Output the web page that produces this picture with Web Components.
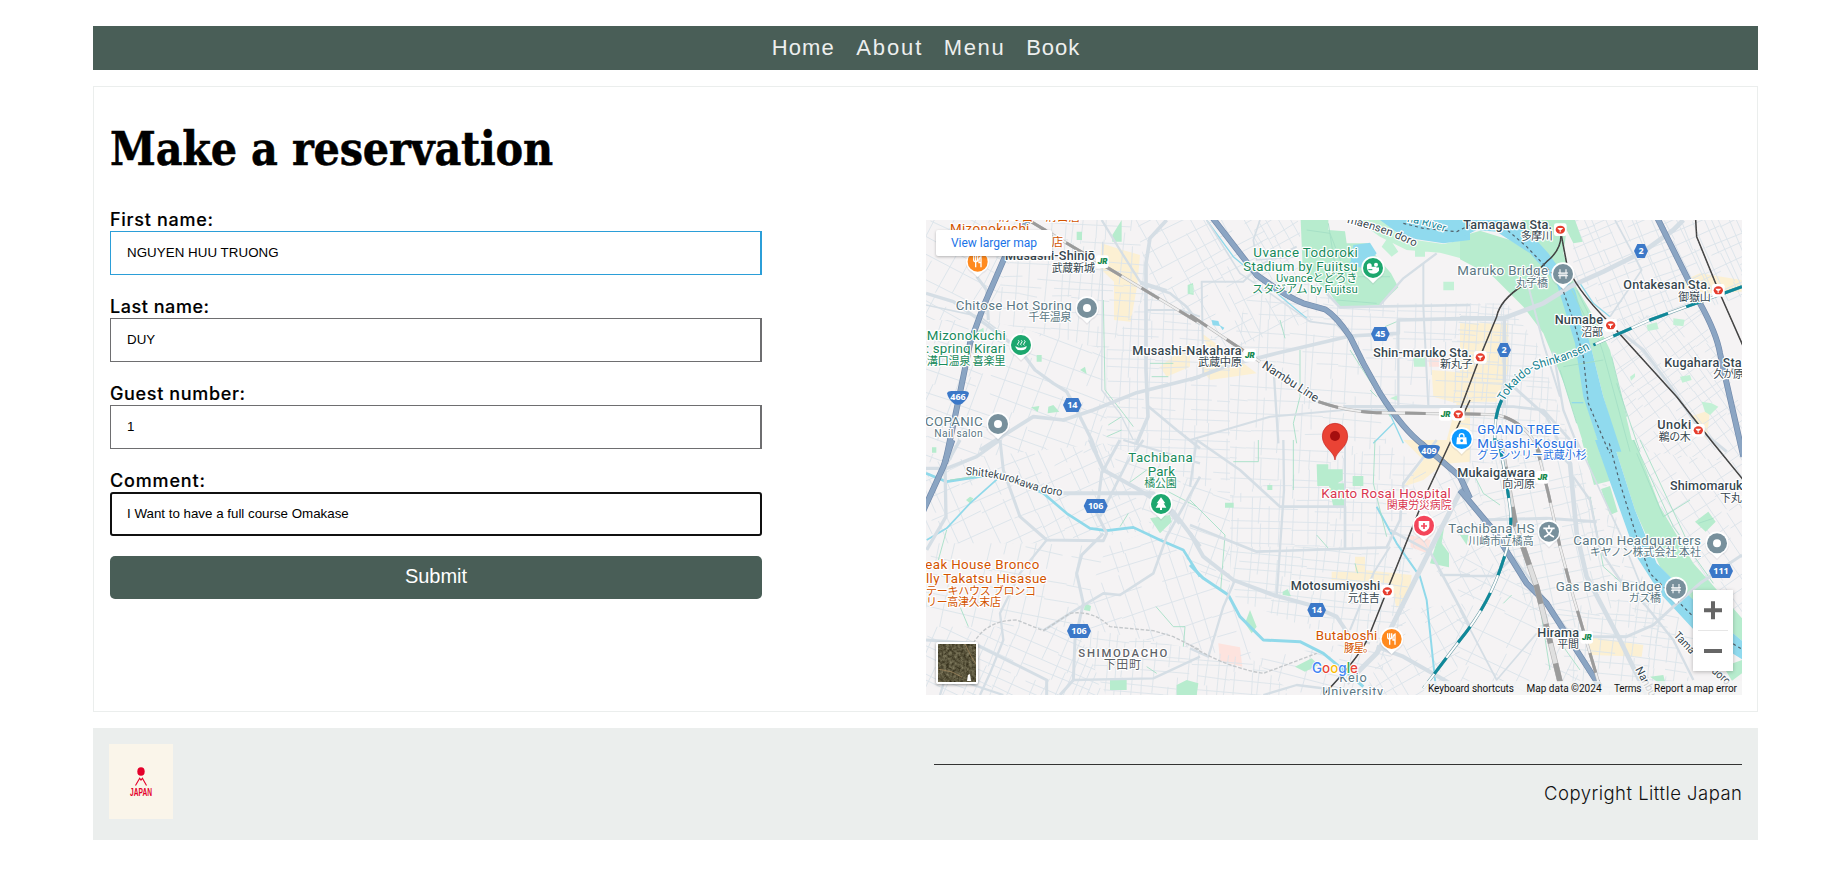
<!DOCTYPE html>
<html lang="en">
<head>
<meta charset="utf-8">
<title>Little Japan - Make a reservation</title>
<style>
body{margin:0;background:#fff;color:#000;font-family:Inter,"Liberation Sans",sans-serif}
</style>
</head>
<body>
<little-japan-page></little-japan-page>
<script>
// Spreads its text evenly over the width that is given to it.
class FitText extends HTMLElement{
  connectedCallback(){
    const r=this.attachShadow({mode:'open'});
    r.innerHTML='<style>:host{display:inline-block;white-space:nowrap;text-align:left}span{display:inline-block}</style><span><slot></slot></span>';
    const w=+this.getAttribute('width'),s=r.querySelector('span');
    const n=this.textContent.length;
    this.style.width=w+'px';
    s.style.letterSpacing=((w-s.getBoundingClientRect().width)/Math.max(1,n-1))+'px';
  }
}
customElements.define('fit-text',FitText);

class SiteNav extends HTMLElement{
  connectedCallback(){
    this.attachShadow({mode:'open'}).innerHTML=`<style>
    :host{display:block;background:#495e57;height:44px}
    nav{display:flex;justify-content:center;align-items:center;gap:22.5px;height:44px;padding-right:0;box-sizing:border-box;font:22px "Liberation Sans",Inter,sans-serif;color:#edefee}
    a{color:inherit;text-decoration:none;display:block;line-height:44px}
    </style><nav><a><fit-text width="62">Home</fit-text></a><a><fit-text width="65">About</fit-text></a><a><fit-text width="60">Menu</fit-text></a><a><fit-text width="53">Book</fit-text></a></nav>`;
  }
}
customElements.define('site-nav',SiteNav);

class FormField extends HTMLElement{
  connectedCallback(){
    const a=k=>this.getAttribute(k);
    this.attachShadow({mode:'open'}).innerHTML=`<style>
    :host{display:block;height:87px}
    label{display:block;height:24px;line-height:25px;font-size:18px;font-weight:500;-webkit-text-stroke:.15px #000}
    input{display:block;box-sizing:border-box;width:652px;height:44px;margin:0;padding:0 16px 2px;border:1px solid #6e6e70;border-right-width:2px;font:13.33px "Liberation Sans",Arial,sans-serif;color:#000;background:#fff;outline:none}
    :host([hot]) input{border-color:#2b9ed8}
    :host([focused]) input{border:2px solid #101010;border-radius:3px;padding:0 15px 2px}
    </style><label><fit-text width="${a('lw')}">${a('label')}</fit-text></label><input value="${a('value')}" style="letter-spacing:${a('track')||0}px">`;
  }
}
customElements.define('form-field',FormField);

class ReservationForm extends HTMLElement{
  connectedCallback(){
    this.attachShadow({mode:'open'}).innerHTML=`<style>
    :host{display:block;width:652px}
    button{display:block;width:652px;height:43px;margin-top:1px;border:0;border-radius:5px;background:#495e57;color:#fff;font:20px "Liberation Sans",Arial,sans-serif;padding:0 0 2px}
    </style>
    <form-field hot label="First name:" lw="103" value="NGUYEN HUU TRUONG" track="0.05"></form-field>
    <form-field label="Last name:" lw="99" value="DUY"></form-field>
    <form-field label="Guest number:" lw="135" value="1"></form-field>
    <form-field focused label="Comment:" lw="95" value="I Want to have a full course Omakase"></form-field>
    <button type="button">Submit</button>`;
  }
}
customElements.define('reservation-form',ReservationForm);

// Street map. Each entry starts with its tile; a tile is 270x230 px and holds three units to a pixel.
const TILE=[[0,0],[810,0],[1620,0],[0,690],[810,690],[1620,690]];
const g=(t,s)=>`<g transform="translate(${TILE[t]})">${s}</g>`;
const esc=s=>s.replace(/&/g,'&amp;');
let seed=7;
const rnd=()=>(seed=(seed*16807)%2147483647)/2147483647;

// A district: streets at one angle inside a polygon.
function district(id,poly,angle,step){
  const p=poly.split(' ').map(q=>q.split(',').map(Number));
  const xs=p.map(q=>q[0]),ys=p.map(q=>q[1]);
  const x0=Math.min(...xs),x1=Math.max(...xs),y0=Math.min(...ys),y1=Math.max(...ys);
  const cx=(x0+x1)/2,cy=(y0+y1)/2,R=Math.hypot(x1-x0,y1-y0)/2;
  let d='';
  for(const vert of [0,1]){
    for(let a=-R;a<R;a+=step*(.5+rnd()*1.1)){
      let b=-R+rnd()*60;
      while(b<R){
        const len=50+rnd()*260,e=b+len,j=(rnd()-.5)*14;
        d+=vert?`M${a|0} ${b|0}L${(a+j)|0} ${e|0}`:`M${b|0} ${a|0}L${e|0} ${(a+j)|0}`;
        b=e+(rnd()<.45?rnd()*70:0);
        if(rnd()<.3)a+=3;
      }
    }
  }
  return `<clipPath id="${id}"><polygon points="${poly}"/></clipPath><g clip-path="url(#${id})"><path transform="translate(${cx} ${cy}) rotate(${angle})" d="${d}"/></g>`;
}
const districts=()=>[
 ['0,0 330,0 200,330 0,330',28,46],['330,0 640,0 690,240 560,420 200,330',4,36],['640,0 1000,0 1180,330 930,420 690,240',-28,40],
 ['0,330 200,330 560,420 560,700 0,760',20,44],['560,420 690,240 930,420 930,860 560,700',2,30],
 ['1000,0 1140,0 1140,210 1010,210',60,34],['1000,210 1180,200 1320,400 1400,700 930,860 930,420',3,42],
 ['1180,240 1430,280 1760,280 1780,560 1400,600 1320,400',2,34],['1620,280 1760,280 1850,400 1960,720 1780,760 1640,760 1600,560',4,24],
 ['0,760 560,700 700,960 350,1000 0,1000',-24,42],['560,700 930,860 930,1160 700,960',20,40],
 ['0,1000 350,1000 560,1010 470,1250 0,1250',12,62],['560,1010 700,960 930,1160 1000,1350 470,1250',-18,54],
 ['0,1250 470,1250 560,1460 0,1460',24,32],['470,1250 1000,1350 1130,1460 560,1460',5,28],
 ['930,860 1400,700 1480,760 1480,1010 930,1010',2,28],['930,1010 1480,1010 1440,1300 1280,1300 930,1160',6,26],
 ['1000,1350 1280,1300 1440,1300 1330,1460 1130,1460',14,46],['1480,760 1640,760 1780,1100 1640,1180 1480,1010',62,42],
 ['1440,1200 1640,1180 1600,1460 1330,1460',-30,42],['1640,760 1960,720 2060,980 2080,1190 1880,1300 1780,1100',78,36],
 ['1620,1000 1880,1160 2000,1460 1600,1460',26,54],['1900,1200 2200,1150 2330,1460 1960,1460',6,27],
 ['1960,0 2220,0 2320,280 2100,350 1960,200',-22,27],['2210,0 2466,0 2466,260 2340,300',-24,28],
 ['2050,330 2340,300 2466,600 2466,760 2150,720',-36,30],['2140,720 2466,760 2466,1220 2330,1130 2200,900',-34,36],
 ['2040,760 2130,1060 2260,1200 2330,1300 2200,1300 2080,1100',12,44]
].map((a,i)=>district('d'+i,...a)).join('');

const P='#b7ecce',urban='#fcf0d3';
const areas=[
 [0,urban,'M545 100L600 118 660 135 652 225 632 335 582 330 582 215 540 175Z'],[0,urban,'M720 470L810 400 810 470 740 500Z'],
 [1,urban,'M35 370L160 460 200 490 60 510 30 470 70 450Z'],[1,urban,'M725 480L840 490 840 690 770 690 800 580 730 560Z'],
 [2,urban,'M0 340H145V480L110 575H0Z'],[2,urban,'M640 225L720 190 845 210 845 245 740 250Z'],[2,urban,'M690 620L750 600 740 690Z'],
 [4,urban,'M640 0H840V65L760 72 700 120 640 140 700 60Z'],[4,urban,'M425 395H495V350H525V390L665 405 660 450 620 505 600 430 425 420Z'],
 [5,urban,'M370 530L385 590 550 615 545 650 395 645Z'],
 [4,'#fde3de','M85 610L150 622 157 680 90 662Z'],[4,'#fde3de','M660 285L722 300 712 340 662 322Z'],[1,'#fde3de','M715 440H748V470H718Z'],
 [0,P,'M577 75L605 30 605 95 577 95ZM470 65h16v25h-16ZM803 225l16-6 2 36-18-4ZM350 435h15v20h-15ZM480 480l15-10 5 22ZM385 590l15-5 18 20-35 5ZM333 592l25-4-5 18ZM170 365l20-12 2 15Z'],
 [1,P,'M332 30H415V60L465 64 470 100H530L560 140 603 190 625 232 570 285 450 293 420 250 338 175Z'],
 [1,'#c3f1d6','M500 30H575L640 85 760 102 840 85V152L750 128 650 120 570 80ZM575 110l20-30 30 45-20 15ZM675 120h30v20h-30ZM760 215h32v26h-32ZM670 440h38v30h-36ZM600 565l25-10v18ZM0 225h10v25H0Z'],
 [2,P,'M0 80L60 62 150 90 215 130 295 220 350 400 372 560 425 725H378L312 520 250 370 190 290 100 200 0 148ZM185 30H345L368 95 340 100 320 60 310 130 345 225 412 340 450 420 524 725H478L430 560 395 420 340 240 240 130Z'],
 [2,'#c3f1d6','M560 345l30-8 6 20-32 6ZM640 325l34 4-4 20-30-4ZM660 500l30-5 5 15-28 8ZM725 575l30 5 20 10-25 25-15-10ZM510 500l15-10v10l-12 12Z'],
 [5,P,'M365 0H405L452 122 402 135ZM423 147L450 138 473 215 450 225ZM458 0H524L600 200 700 370 846 535V602L700 482 600 380 525 210ZM705 245l40-30 22 30-30 30ZM790 680l56-20v40l-30 22ZM570 710l40-5 10 40ZM0 285l25 0-5 30Z'],
 [3,P,'M690 235L750 225 755 245 720 280 708 262ZM495 490l18 8-3 16-18-4ZM570 715h50v35h-50ZM770 735l30-15 35 10-5 36-60 0ZM138 180l12-10 10 5-10 15ZM36 22h13v16h-13Z'],
 [4,P,'M380 73H415V88H458V120L430 138H382ZM415 130H462V200H430ZM488 108h32v30h-32ZM232 135h15v15h-15ZM105 188h26v15h-26ZM278 455l15-8 10 22-25-4ZM165 550l15-40 20 50-15 20ZM315 680l50-25 20 20-40 20ZM765 245L745 290 720 370 777 382V340L755 310ZM0 725l20 40H0Z'],
];
const waters=[
 [1,'M570 30H840V90L760 100 640 82Z'],[2,'M0 30H140L215 75 265 130 345 240 395 420 430 560 484 725H424L370 560 345 400 290 220 210 130 110 65 50 60 0 85Z'],
 [5,'M405 0H458L525 210 590 370 700 480 846 602V658L700 568 600 460 530 350Z'],
 [1,'M490 105L540 98 560 130 520 175 480 165ZM65 330l20 3 5 15-22-2ZM88 345l15 8-5 8Z'],
];
const roads=[
 [0,'M18 250L100 275 200 345 300 420 345 480 400 520 440 545 470 600 515 690 530 730',10],[0,'M170 200L200 240 205 330',9],
 [0,'M18 285L180 320 260 380',5],[0,'M740 30L690 85 678 160 678 480 684 620 650 700',11],[0,'M660 220L750 250 800 290 840 345',8],
 [0,'M180 720L260 670 340 620 430 630 520 600 650 548 840 500',11],[0,'M680 585L770 660 840 715',8],[0,'M545 30L600 120 660 215 740 240',7],
 [0,'M678 300H780L840 320',6],[0,'M548 95L545 540 600 610 640 690',4],
 [1,'M0 510L120 465 260 430 480 378 625 370 625 330 840 325',11],[1,'M40 500L35 215H160L210 165 320 110',6],[1,'M840 285L540 290 450 292 410 250',8],
 [1,'M570 285L640 205 740 130',7],[1,'M625 330L625 590',7],[1,'M250 465L265 700',7],[1,'M460 590L840 590',10],[1,'M700 160V290L715 590',6],[1,'M50 30L150 190 240 250 360 335 440 345 480 385',5],[1,'M0 690L240 620 460 600 610 600',6],[1,'M210 30L190 90 200 150 320 140',5],
 [2,'M0 325H130L250 280 330 230 430 185 550 125 640 60 670 30',14],[2,'M0 590L160 590 250 600 330 690',8],[2,'M133 330L133 590',10],[2,'M480 365L550 420 640 540 720 660 800 725',9],[2,'M280 425L310 600 360 725',7],[2,'M450 320L545 180 465 30',5],[2,'M200 210L250 400 300 560',6],[2,'M160 530L260 620 310 725',9],
 [3,'M18 85H80L170 50 240 0',10],[3,'M240 0L250 90 300 230 380 300 550 302 560 280 530 220 545 100 600 0',9],[3,'M120 0L75 80 78 230 20 330',10],[3,'M510 0L550 90 650 145 760 215 840 320',12],[3,'M430 160H700L780 250',12],[3,'M670 0L620 70 540 230',8],[3,'M550 280L485 345 470 400 490 490 465 600 460 720 420 765',9],[3,'M380 300L300 400 240 520 250 600 210 700 180 765',7],[3,'M18 600L160 610 280 670 380 720 380 765',9],[3,'M370 572L450 520 550 460 600 465 700 400 740 290 840 110',8],[3,'M60 765L80 700 160 735 250 765M460 720L700 715 840 650M610 0L840 70',7],
 [4,'M20 0L150 90 270 200H465V325',8],[4,'M0 280L40 350 130 420 250 465 360 495 440 530 480 590',12],[4,'M0 255L200 335 590 322 630 240 640 130 740 0',8],[4,'M600 320L550 400 480 570',6],[4,'M280 0L282 150 260 470',7],[4,'M20 0L0 140',7],[4,'M465 0V320',6],[4,'M840 100L720 330 600 570 560 640 470 730',15],[4,'M560 620L640 650 780 730',12],[4,'M600 270L720 335 840 560',8],[4,'M135 420L100 500 70 600 55 650 0 625M480 590L540 610M220 765L320 735 440 750',7],[4,'M750 405H840',7],
 [5,'M260 0L330 70 350 280 380 410 480 600 560 765',14],[5,'M60 240L260 235 410 245',9],[5,'M0 408H100L160 350',8],[5,'M340 110L390 180 420 330 480 420 560 500 640 600 700 720',7],[5,'M380 590L500 590 580 555 640 500 720 430 846 345',9],[5,'M0 510L110 720 230 580',5],[5,'M330 580L250 470 160 350',6],[5,'M350 0L480 280 560 480',5],
];
const green=[[1,'M330 420L330 560 310 640 320 700M270 330L285 385M480 420L570 560 600 620M585 350L620 335M540 540L560 560M415 40L440 200M350 60L420 70 470 200 600 200M440 270L560 280'],
 [0,'M550 270L555 540 610 610 640 650M565 645L605 620M690 460H760M695 500H745M560 680L605 660'],[4,'M0 180L105 285 92 450M555 0L550 130 590 290M310 0V150M380 285L415 325M495 370L503 400M130 65H205V0'],
 [3,'M708 500L760 560 795 560 790 620M680 680L710 700M100 500L120 500 145 560M80 270L55 360M600 260L625 220M625 130L680 90M745 155L830 200M90 120L200 105'],
 [2,'M350 240L400 340 430 430 510 725M335 240L380 330M455 440L500 620M470 520L540 725M310 470L430 450M300 480L350 640'],[5,'M240 500L270 690M40 100L70 160 120 195M520 0L640 260 760 430M540 0L680 300M530 40L610 230M390 170L430 380 520 460M310 620L360 690M610 230L690 180M130 490L155 465M715 250L760 235']];
const streams=[[3,'M18 100L80 125 240 100 370 160 440 220 510 265 560 272 640 262 720 300 790 330 840 410',8],[3,'M240 110L150 190 80 265 20 300',5],[4,'M0 375L40 415 115 465 150 530 220 600 330 605 400 640 520 740',9],[4,'M560 200L620 310 690 410 710 480 740 765',6],[1,'M50 30L130 140 350 325',4],[1,'M550 700L610 640M590 590L640 700',4],[2,'M360 220L400 280 450 320',4],[2,'M335 578H370',4]];
const hw=[[0,'M325 30L255 140 190 290 150 400 130 500 105 620 75 760'],[3,'M97 0L70 80 10 212'],
 [1,'M65 20L200 195Q290 260 340 280L405 298Q440 320 480 380L520 460 570 550Q640 660 700 705L810 800 840 865'],[5,'M0 150L100 270 200 430 260 490 330 600 420 740'],[2,'M590 20L660 160 720 280Q770 370 780 430L800 520 850 740']];
const rail=[[0,'M325 30L840 340'],[1,'M0 315L210 455M385 575Q470 605 560 608L750 611'],[2,'M0 611L110 614Q180 630 220 690L240 730'],[5,'M225 0L265 160 300 320 340 470 415 725']];
const wideRail=[[5,'M120 0L165 250 230 440 300 725']];
const lines=[[2,'M303 70Q305 120 260 155L190 225Q120 270 110 320L60 440 0 600'],[2,'M303 70L320 160Q340 230 450 340L650 560 760 700 850 810'],[2,'M707 30L710 80 775 240 850 410'],[4,'M840 -120L700 180 540 580Q520 640 400 765']];
const shink=[[2,'M846 230L680 290 570 330 400 405'],[2,'M125 570Q100 620 105 700'],[5,'M115 0Q130 60 150 200Q160 280 130 360 90 490 0 600L-110 745']];
const S='#37474f',Gy='#5b7884',Gn='#178a5b',Or='#d35400';
const labels=[
 [0,90,328,68,40,'Mizonokuchi',Or],[0,200,480,32,34,'ー溝の口ー溝口店',Or],[0,395,427,109,34,'店',Or],
 [0,255,525,151,38,'Musashi-Shinjō',S,500],[0,395,525,186,34,'武蔵新城',S],
 [0,107,455,299,40,'Chitose Hot Spring',Gy],[0,325,455,333,34,'千年温泉',Gy],
 [0,20,257,390,40,'Mizonokuchi',Gn],[0,18,257,430,40,': spring Kirari',Gn],[0,20,257,464,34,'溝口温泉 喜楽里',Gn],
 [0,637,965,434,38,'Musashi-Nakahara',S,500],[0,834,966,468,34,'武蔵中原',S],
 [0,15,188,648,40,'COPANIC',Gy],[0,43,188,680,31,'Nail salon',Gy],
 [1,190,503,141,40,'Uvance Todoroki',Gn],[1,160,503,183,40,'Stadium by Fujitsu',Gn],[1,258,503,215,34,'Uvanceとどろき',Gn],[1,186,503,248,34,'スタジアム by Fujitsu',Gn],
 [1,550,845,440,38,'Shin-maruko Sta.',S,500],[1,750,848,474,34,'新丸子',S],
 [2,10,276,56,38,'Tamagawa Sta.',S,500],[2,182,278,90,33,'多摩川',S],
 [2,-8,264,195,40,'Maruko Bridge',Gy],[2,167,264,232,33,'丸子橋',Gy],
 [2,490,752,238,38,'Ontakesan Sta.',S,500],[2,655,752,273,33,'御嶽山',S],
 [2,284,429,343,38,'Numabe',S,500],[2,364,429,377,33,'沼部',S],
 [2,613,845,470,38,'Kugahara Sta',S,500],[2,760,852,504,33,'久が原',S],
 [2,592,694,658,38,'Unoki',S,500],[2,596,692,692,33,'鵜の木',S],
 [2,52,299,671,40,'GRAND TREE','#1f6fe0'],[2,52,350,713,40,'Musashi-Kosugi','#1f6fe0'],[2,52,380,746,33,'グランツリー武蔵小杉','#1f6fe0'],
 [3,625,818,65,40,'Tachibana',Gn],[3,683,765,107,40,'Park',Gn],[3,673,770,140,33,'橘公園',Gn],
 [3,16,358,387,40,'eak House Bronco',Or],[3,18,380,429,40,'lly Takatsu Hisasue',Or],[3,18,348,464,33,'テーキハウス ブロンコ',Or],[3,18,243,498,33,'リー高津久末店',Or],
 [3,475,742,650,34,'SHIMODACHO','#5f6368',500],[3,551,663,687,36,'下田町','#5f6368'],
 [4,394,782,173,40,'Kanto Rosai Hospital','#d9364f'],[4,590,785,206,33,'関東労災病院','#d9364f'],
 [4,302,571,451,38,'Motosumiyoshi',S,500],[4,473,569,486,33,'元住吉',S],
 [4,377,562,599,40,'Butaboshi',Or],[4,462,552,636,33,'豚星。',Or],
 [4,448,530,726,38,'Keio',Gy],[4,397,579,767,38,'University',Gy],
 [5,-8,225,110,38,'Mukaigawara',S,500],[5,127,225,144,33,'向河原',S],
 [4,775,1033,279,40,'Tachibana HS',Gy],[4,835,1031,314,33,'川崎市立橘高',Gy],
 [5,340,723,315,40,'Canon Headquarters',Gy],[5,389,723,348,33,'キヤノン株式会社 本社',Gy],
 [5,287,603,453,40,'Gas Bashi Bridge',Gy],[5,506,603,486,33,'ガス橋',Gy],
 [5,232,357,590,38,'Hirama',S,500],[5,292,357,624,33,'平間',S],
 [5,630,848,151,38,'Shimomaruk',S,500],[5,780,878,187,33,'下丸子',S]
];
const text=l=>g(l[0],`<text x="${l[1]}" y="${l[3]}" font-size="${l[4]}" textLength="${l[2]-l[1]}" lengthAdjust="spacing" fill="${l[6]}" font-weight="${l[7]||400}">${esc(l[5])}</text>`);
const curved=[[1,'n1','M214 472L384 582','Nambu Line',36,S,194],[1,'n2','M470 38Q600 70 690 118','maensen doro',33,S,218],[1,'n3','M650 35Q720 48 778 72','na River',33,'#16889c',118],
 [2,'n4','M132 575Q180 490 260 468T400 412','Tokaido-Shinkansen',36,'#12808e',312],[3,'n5','M136 104Q240 112 300 136T428 168','Shittekurokawa doro',34,S,298],
 [5,'n6','M640 588L760 715','Tama',34,S,76],[5,'n7','M735 680L820 755','n doro',34,S,86],[5,'n8','M525 688L580 790','Nanbu',34,S,96]];
const pins=[[0,173,155,'#ff8a1f','food'],[0,501,294,'#78909c','dot'],[0,303,405,'#1da76e','spa'],[0,234,642,'#78909c','dot'],[1,549,174,'#1da76e','stadium'],[2,5,687,'#0b99ff','bag'],[2,309,192,'#78909c','bridge'],[3,723,192,'#1da76e','tree'],[4,702,257,'#f4455a','cross'],[4,605,597,'#ff8a1f','food'],[5,267,275,'#78909c','school'],[5,771,310,'#78909c','dot'],[5,648,446,'#78909c','bridge']];
const glyph={
 dot:'<circle r="12" fill="#fff"/>',
 food:'<path d="M-12-17v11q0 6 6 6h0q6 0 6-6v-11M-6-17V17M10 17V-15q-7 3-6 18h6" fill="none" stroke="#fff" stroke-width="4"/>',
 spa:'<path d="M-17 3q0 13 17 13T17 3q-6 5-17 5T-17 3Z" fill="#fff"/><path d="M-8-14q5 4 0 8t0 7M1-14q5 4 0 8t0 7M10-14q5 4 0 8t0 7" fill="none" stroke="#fff" stroke-width="3"/>',
 stadium:'<path d="M-18-10q8-8 14 0v6h12q4 4 10 2v10q-8 12-26 8-12-8-10-26Z" fill="#fff"/><circle cx="9" cy="-10" r="6" fill="#fff"/><path d="M-14 5h12" stroke="#1da76e" stroke-width="3"/>',
 bag:'<path d="M-14-5h28l2 21h-32Z" fill="#fff"/><path d="M-7-5v-4q0-7 7-7t7 7v4" fill="none" stroke="#fff" stroke-width="4"/><circle cy="5" r="4" fill="#0b99ff"/>',
 bridge:'<path d="M-15 5H15M-15-3H15M-9-14V14M9-14V14M-3-3V5M3-3V5" stroke="#fff" stroke-width="3.2" fill="none"/>',
 tree:'<path d="M0-20L13-2H8L16 11H3V18H-3V11H-16L-8-2H-13Z" fill="#fff"/>',
 cross:'<path d="M-16-14H16V4Q14 14 0 18-14 14-16 4Z" fill="#fff"/><path d="M0-8V10M-9 1H9" stroke="#f4455a" stroke-width="5"/>',
 school:'<path d="M0-19V-11M-17-10H17M-9-8Q-4 8 15 16M9-8Q4 8-15 16" fill="none" stroke="#fff" stroke-width="5"/>'};
const pin=p=>g(p[0],`<g transform="translate(${p[1]} ${p[2]})"><path d="M0 48L-15 33A36 36 0 1 1 15 33Z" fill="#8892" transform="translate(0 3)"/><path d="M0 46L-15 31A35 35 0 1 1 15 31Z" fill="#fff"/><circle r="30" fill="${p[3]}"/>${glyph[p[4]]}</g>`);
const jr=[[0,547,155],[1,179,436],[1,766,613],[5,247,112],[5,380,592]];
const tokyu=[[1,805,613],[2,301,59],[2,775,241],[2,452,346],[2,61,442],[2,715,661],[4,592,454]];
const hex=[[0,457,585,'14'],[1,571,372,'45'],[2,543,123,'2'],[2,132,420,'2'],[3,527,198,'106'],[3,477,573,'106'],[4,380,510,'14'],[5,783,393,'111']];
const shield=[[0,114,563,'466'],[4,717,35,'409']];
const hexD=w=>`M${-w} 0L${-w+10} -21H${w-10}L${w} 0L${w-10} 21H${-w+10}Z`;
const stroke=(arr,c,w,x='')=>arr.map(a=>g(a[0],`<path d="${a[1]}" stroke="${c}" stroke-width="${w||a[2]}" ${x}/>`)).join('');

class StreetMap extends HTMLElement{
  connectedCallback(){
    let o='';
    o+=areas.filter(a=>a[1]===urban||a[1][1]==='f').map(a=>g(a[0],`<path d="${a[2]}" fill="${a[1]}"/>`)).join('');
    o+=`<g fill="none" stroke="#dce4ea" stroke-width="2.6">${districts()}</g>`;
    o+=areas.filter(a=>a[1]!==urban&&a[1][1]!=='f').map(a=>g(a[0],`<path d="${a[2]}" fill="${a[1]}"/>`)).join('');
    o+=waters.map(a=>g(a[0],`<path d="${a[1]}" fill="#90daee"/>`)).join('');
    o+='<g fill="none" stroke-linejoin="round">';
    o+=stroke(streams,'#90d9ea')+stroke(green,'#a3dfc5',2.6)+stroke(roads,'#d5dee5');
    o+=g(3,'<path d="M160 610Q200 540 290 540L370 572 450 520Q520 510 570 560L700 572 760 590 840 630" stroke="#c3c7ca" stroke-width="4" stroke-dasharray="11 5"/>')+g(4,'<path d="M0 615Q100 680 220 700L380 640" stroke="#c3c7ca" stroke-width="4" stroke-dasharray="11 5"/>');
    o+=stroke(hw,'#7189aa',18)+stroke(hw,'#8ba5c3',14);
    o+=stroke(rail,'#b4b4b4',9)+stroke(rail,'#eee',6)+stroke(rail,'#9b9b9b',9,'stroke-dasharray="62 70"');
    o+=stroke(wideRail,'#b4b4b4',17)+stroke(wideRail,'#dfdfdf',13)+stroke(wideRail,'#9b9b9b',16,'stroke-dasharray="60 62" stroke-dashoffset="40"');
    o+=stroke(lines,'#3d3d3d',4.5)+stroke(lines,'#777',1,'stroke-dasharray="4 4"');
    o+=stroke(shink,'#6b9ca5',9)+stroke(shink,'#fff',6)+stroke(shink,'#0f8899',9,'stroke-dasharray="60 58"');
    o+=g(2,'<path d="M130 50L200 110 300 215 340 330 370 440 385 580 440 710 450 730" stroke="#52616b" stroke-width="3.5" stroke-dasharray="9 9"/>')+g(5,'<path d="M448 10L480 130 530 290 570 400 660 490 720 550 846 628" stroke="#52616b" stroke-width="3.5" stroke-dasharray="9 9"/>')+g(1,'<path d="M640 40L700 55 800 65 840 45" stroke="#52616b" stroke-width="3.5" stroke-dasharray="9 9"/>');
    o+='</g>';
    o+='<g class="t">'+labels.map(text).join('')+curved.map(c=>g(c[0],`<path id="${c[1]}" d="${c[2]}" fill="none"/><text font-size="${c[4]}" fill="${c[5]}"><textPath href="#${c[1]}" textLength="${c[6]}" lengthAdjust="spacingAndGlyphs">${c[3]}</textPath></text>`)).join('')+'</g>';
    o+=jr.map(a=>g(a[0],`<rect x="${a[1]-19}" y="${a[2]-19}" width="38" height="38" rx="7" fill="#fff"/><text class="jr" x="${a[1]-14}" y="${a[2]+8}" textLength="29" lengthAdjust="spacingAndGlyphs">JR</text>`)).join('');
    o+=tokyu.map(a=>g(a[0],`<rect x="${a[1]-19}" y="${a[2]-19}" width="38" height="38" rx="7" fill="#fff"/><ellipse cx="${a[1]}" cy="${a[2]}" rx="14" ry="12" fill="#e63c2c"/><path d="M${a[1]-9} ${a[2]-5}h18l-6 6h-2v7h-3v-7h-2Z" fill="#fff"/>`)).join('');
    o+=hex.map(a=>g(a[0],`<g transform="translate(${a[1]} ${a[2]})"><path d="${hexD(a[3].length===3?36:a[3].length===2?28:21)}" fill="#3b78c8"/><text class="n" y="10">${a[3]}</text></g>`)).join('');
    o+=shield.map(a=>g(a[0],`<g transform="translate(${a[1]} ${a[2]})"><path d="M-33-14Q-30-20-20-20H20Q30-20 33-14 30 4 12 18 0 24-12 18-30 4-33-14Z" fill="#3b78c8"/><text class="n" y="8">${a[3]}</text></g>`)).join('');
    o+=pins.map(pin).join('');
    o+=g(1,'<path d="M435 750C432 722 397 714 397 678A38 38 0 0 1 473 678C473 714 438 722 435 750Z" fill="#ea4335" stroke="#c5221f" stroke-width="2"/><circle cx="435" cy="678" r="15" fill="#a50e0e"/>');
    o+=g(4,'<text class="goog" x="366" y="698" font-size="42" textLength="138" lengthAdjust="spacingAndGlyphs"><tspan fill="#4285f4">G</tspan><tspan fill="#ea4335">o</tspan><tspan fill="#fbbc04">o</tspan><tspan fill="#4285f4">g</tspan><tspan fill="#34a853">l</tspan><tspan fill="#ea4335">e</tspan></text>');
    this.attachShadow({mode:'open'}).innerHTML=`<style>
    :host{display:block;position:relative;width:816px;height:475px;overflow:hidden;background:#f5f3f4;font-family:Roboto,"Noto Sans CJK JP",sans-serif}
    svg{display:block}
    .t text{stroke:#fff;stroke-width:7px;stroke-linejoin:round;paint-order:stroke}
    .n{font-size:27px;font-weight:700;fill:#fff;text-anchor:middle;font-family:"Noto Sans",sans-serif}
    .jr{font:italic 900 22px Inter,sans-serif;fill:#178a4f}
    .goog{font-family:Inter,sans-serif;font-weight:500;stroke:#fff;stroke-width:5px;paint-order:stroke}
    .larger{position:absolute;left:10px;top:10px;width:116px;height:26px;background:#fff;border-radius:2px;box-shadow:0 1px 3px #0004;display:flex;align-items:center;justify-content:center;font-size:12px;color:#1a73e8}
    .sat{position:absolute;left:10px;top:422px;width:38px;height:38px;border:2px solid #fff;border-radius:2px;box-shadow:0 1px 3px #0006;overflow:hidden}
    .zoom{position:absolute;left:767px;top:370px;width:40px;height:81px;background:#fff;box-shadow:0 1px 4px #0004}
    .legal{position:absolute;right:0;bottom:0;height:14px;width:318px;background:#f5f5f5c8;font-size:10px;color:#111;display:flex;align-items:center;justify-content:flex-end;padding-right:5px;gap:12.5px;box-sizing:border-box}
    </style>
    <svg width="816" height="475" viewBox="18 30 2448 1425">${o}</svg>
    <div class="larger"><fit-text width="86">View larger map</fit-text></div>
    <div class="sat"><svg width="38" height="38" viewBox="0 0 38 38"><defs><filter id="grain" x="0" y="0" width="1" height="1" color-interpolation-filters="sRGB"><feTurbulence type="fractalNoise" baseFrequency=".35" numOctaves="4" seed="4"/><feColorMatrix values=".45 .1 0 0 .08 .45 .1 0 0 .06 .4 .1 0 0 -.01 0 0 0 0 1"/></filter></defs><rect width="38" height="38" fill="#57513f" filter="url(#grain)"/><path d="M27 0L33 12 38 20M0 25L14 28 24 33" fill="none" stroke="#a08760" stroke-width=".8"/><path d="M29 37l1-6 2-1 1 7Z" fill="#fff"/></svg></div>
    <div class="zoom"><svg width="40" height="81" viewBox="0 0 40 81"><path d="M11 20.3H29M20 11.3V29.3M11 61H29" stroke="#666" stroke-width="4"/><path d="M5 40.5H35" stroke="#e6e6e6"/></svg></div>
    <div class="legal"><fit-text width="86">Keyboard shortcuts</fit-text><fit-text width="75">Map data ©2024</fit-text><fit-text width="27.5">Terms</fit-text><fit-text width="83">Report a map error</fit-text></div>`;
  }
}
customElements.define('street-map',StreetMap);

class SiteFooter extends HTMLElement{
  connectedCallback(){
    this.attachShadow({mode:'open'}).innerHTML=`<style>
    :host{display:flex;justify-content:space-between;box-sizing:border-box;height:112px;padding:16px;background:#ebeeed}
    .logo{display:block;width:64px;height:75px;background:#faf5ea}
    .copy{width:808px;height:60px;margin-top:20px;border-top:1px solid #333;box-sizing:border-box;text-align:right;font-size:18.5px;font-weight:300;line-height:22px;padding-top:17px;color:#111}
    .logo text{font-weight:700;font-size:11px;font-family:"Liberation Sans",sans-serif;fill:#e4002b}
    </style>
    <svg class="logo" viewBox="0 0 64 75"><ellipse cx="32" cy="27.5" rx="3.7" ry="4.3" fill="#e4002b"/><path d="M26.5 41.5L30.7 34.3L32 36L33.4 34.3L37.5 41.5" fill="none" stroke="#e4002b" stroke-width="1.1"/><text x="21" y="51.6" textLength="22" lengthAdjust="spacingAndGlyphs">JAPAN</text></svg>
    <div class="copy"><fit-text width="198">Copyright Little Japan</fit-text></div>`;
  }
}
customElements.define('site-footer',SiteFooter);

class LittleJapanPage extends HTMLElement{
  connectedCallback(){
    this.attachShadow({mode:'open'}).innerHTML=`<style>
    :host{display:grid;gap:16px;padding:26px 90px 0 93px}
    main{box-sizing:border-box;height:626px;border:1px solid #ebeeed;padding:0 15px 0 16px}
    h1{margin:0;height:120px;padding-top:33px;box-sizing:border-box;font:700 46px/58px "DejaVu Serif Condensed","DejaVu Serif",serif;font-stretch:condensed;-webkit-text-stroke:.5px #000}
    .cols{display:flex;justify-content:space-between;align-items:flex-start}
    street-map{margin-top:13px}
    </style>
    <site-nav></site-nav>
    <main><h1><fit-text width="443">Make a reservation</fit-text></h1><div class="cols"><reservation-form></reservation-form><street-map></street-map></div></main>
    <site-footer></site-footer>`;
  }
}
customElements.define('little-japan-page',LittleJapanPage);
</script>
</body>
</html>
